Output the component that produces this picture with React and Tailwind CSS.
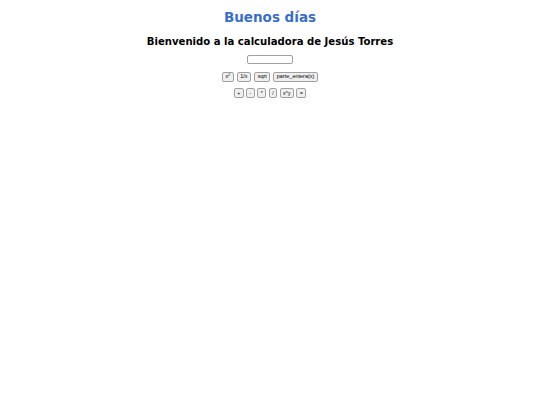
export default function App() {
  const row1 = [
    { label: <>x<sup className="text-[3.5px]">2</sup></>, key: 'sq' },
    { label: '1/x', key: 'inv' },
    { label: 'sqrt', key: 'sqrt' },
    { label: 'parte_entera(x)', key: 'int' },
  ];
  const row2 = ['+', '-', '*', '/', 'x^y', '='];

  const btn =
    'h-[10px] flex items-center justify-center rounded-[2px] border border-[#a0a0a0] bg-[#efefef] leading-none text-black';

  return (
    <div className="min-h-[405px] w-[540px] bg-white" style={{ fontFamily: '"DejaVu Sans", Verdana, sans-serif' }}>
      <div className="flex flex-col items-center pt-[9px]">
        <h1 className="text-[13.5px] font-bold leading-[17px] text-[#3a6fc7]">Buenos días</h1>
        <h2 className="mt-[10px] text-[10.1px] font-bold leading-[12px] text-black">
          Bienvenido a la calculadora de Jesús Torres
        </h2>
        <input
          type="text"
          className="mt-[7px] h-[9px] w-[46px] rounded-[2px] border border-[#a0a0a0] bg-white"
        />
        <div
          className="mt-[8px] flex gap-[3px]"
          style={{ fontFamily: '"Liberation Sans", Arial, sans-serif' }}
        >
          {row1.map((b) => (
            <button key={b.key} className={`${btn} px-[2.5px] text-[5.5px]`}>
              {b.label}
            </button>
          ))}
        </div>
        <div
          className="mt-[6px] flex gap-[2.5px]"
          style={{ fontFamily: '"Liberation Sans", Arial, sans-serif' }}
        >
          {row2.map((b) => (
            <button key={b} className={`${btn} px-[2.5px] text-[5px]`}>
              {b}
            </button>
          ))}
        </div>
      </div>
    </div>
  );
}
